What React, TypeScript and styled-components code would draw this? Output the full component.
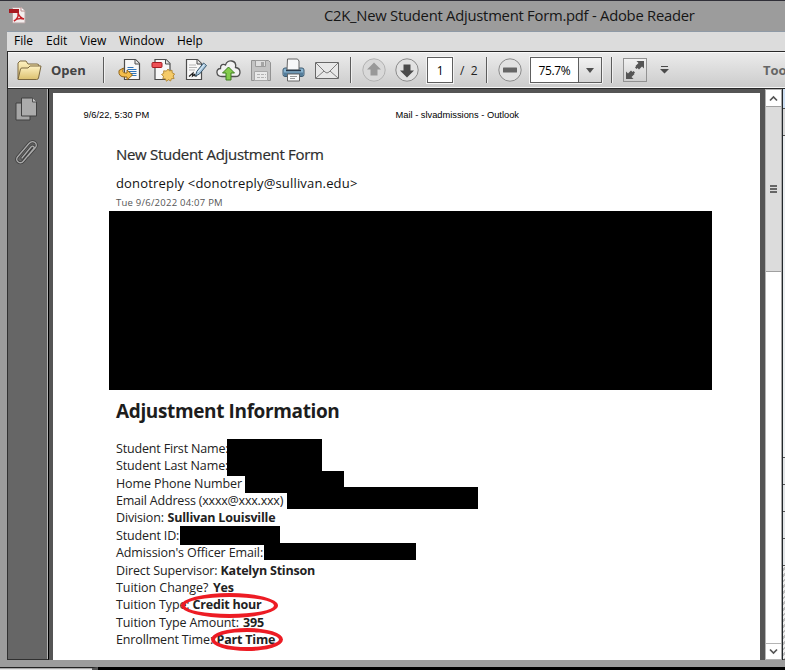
import React from "react";
import styled, { createGlobalStyle, css } from "styled-components";

const ui = `"Open Sans", "Noto Sans", sans-serif`;

const GlobalStyle = createGlobalStyle`
  *, *::before, *::after { box-sizing: border-box; }
  body { margin: 0; overflow: hidden; font-family: ${ui}; }
  svg { display: block; }
`;

const Desktop = styled.div`
  width: 785px;
  height: 670px;
  display: flex;
  flex-direction: column;
  overflow: hidden;
  background: #9c9c9c;
  border-top: 1px solid #302f38;
`;

const TitleBar = styled.header`
  height: 30px;
  flex: none;
  display: flex;
  padding: 6px 0 0 9px;
`;

const Title = styled.h1`
  margin: -3px 0 0 298px;
  font-size: 14.8px;
  line-height: 22px;
  font-weight: 400;
  color: #161616;
  white-space: nowrap;
  letter-spacing: -0.25px;
`;

const Window = styled.main`
  height: 629px;
  flex: none;
  margin-left: 7px;
  display: flex;
  flex-direction: column;
`;

const MenuBar = styled.nav`
  height: 20px;
  flex: none;
  display: flex;
  background: #dcdcdc;
  border-top: 1px solid #8f9aa6;
  padding-left: 7px;
`;

const MenuItem = styled.span<{ $width: number }>`
  width: ${(p) => p.$width}px;
  font-size: 12px;
  line-height: 18px;
  color: #000;
`;

const ToolBar = styled.div`
  height: 38px;
  flex: none;
  display: flex;
  align-items: center;
  overflow: hidden;
  background: linear-gradient(#ececec, #cbcbcb);
  border-top: 1px solid #282828;
  border-bottom: 1px solid #282828;
  border-left: 1px solid #282828;
  box-shadow: inset 0 1px #fafafa, inset 0 -1px #f5f5f5;
`;

const Tool = styled.span<{ $left: number }>`
  flex: none;
  margin-left: ${(p) => p.$left}px;
`;

const Divider = styled.i<{ $left: number }>`
  flex: none;
  width: 2px;
  height: 26px;
  margin-left: ${(p) => p.$left}px;
  background: linear-gradient(90deg, #5c5c5c 50%, #f0f0f0 50%);
`;

const ToolLabel = styled.span<{ $left: number; $width: number; $bold?: boolean; $tone?: string }>`
  flex: none;
  margin-left: ${(p) => p.$left}px;
  width: ${(p) => p.$width}px;
  font-size: ${(p) => (p.$bold ? 13 : 12)}px;
  font-weight: ${(p) => (p.$bold ? 700 : 400)};
  color: ${(p) => p.$tone ?? "#222"};
  white-space: nowrap;
`;

const Field = styled.span<{ $left: number; $width: number }>`
  flex: none;
  display: flex;
  align-items: center;
  justify-content: center;
  margin-left: ${(p) => p.$left}px;
  width: ${(p) => p.$width}px;
  height: 26px;
  border: 1px solid #5e5e5e;
  background: #fff;
  box-shadow: 0 0 0 1px #f3f3f3;
  font-size: 12px;
  color: #000;
  letter-spacing: -0.35px;
`;

const DropButton = styled.span`
  flex: none;
  width: 23px;
  height: 26px;
  border: 1px solid #5e5e5e;
  border-left: 0;
  background: linear-gradient(#f2f2f2, #d5d5d5);
  box-shadow: 1px 0 #f3f3f3, 0 1px #f3f3f3, 0 -1px #f3f3f3;
  display: flex;
  align-items: center;
  justify-content: center;
`;

const ExpandButton = styled.span`
  flex: none;
  width: 24px;
  height: 24px;
  margin-left: 10px;
  border: 1px solid #929292;
  background: linear-gradient(#f1f1f1, #d0d0d0);
`;

const Body = styled.div`
  height: 571px;
  flex: none;
  display: flex;
`;

const SideBar = styled.aside`
  width: 42px;
  flex: none;
  background: #666;
  border-left: 1px solid #303030;
  border-bottom: 1px solid #303030;
  border-right: 1px solid #000;
  box-shadow: inset -1px 0 #b5b5b5;
  padding: 8px 0 0 7px;
`;

const Canvas = styled.div`
  width: 716px;
  flex: none;
  background: #555;
  padding: 4px 5px 0 4px;
`;

const Page = styled.article`
  position: relative;
  height: 567px;
  background: #fff;
  padding: 15px 0 0 63px;
  overflow: hidden;
`;

const PageHeader = styled.div`
  display: flex;
  margin-left: -32.5px;
  height: 14px;
  font: 9.3px/14px "Liberation Sans", Arial, sans-serif;
  color: #000;
  white-space: nowrap;
`;

const Stamp = styled.span<{ $width: number }>`
  width: ${(p) => p.$width}px;
`;

const Subject = styled.h2`
  margin: 20px 0 0;
  height: 24px;
  font-size: 15px;
  line-height: 24px;
  font-weight: 400;
  color: #2d2d2d;
  -webkit-text-stroke: 0.2px #2d2d2d;
  letter-spacing: -0.3px;
`;

const Sender = styled.p`
  margin: 7px 0 0;
  height: 20px;
  font-size: 13px;
  line-height: 20px;
  color: #111;
  letter-spacing: 0.17px;
`;

const Sent = styled.p`
  margin: 3px 0 0;
  height: 14px;
  font-size: 9.5px;
  line-height: 14px;
  color: #555;
  letter-spacing: 0.24px;
`;

const SectionTitle = styled.h3`
  margin: 187px 0 0;
  height: 28px;
  font-size: 19px;
  line-height: 28px;
  font-weight: 700;
  color: #1d1d1d;
  letter-spacing: -0.37px;
`;

const Details = styled.dl`
  margin: 15px 0 0;
`;

const Detail = styled.div`
  display: flex;
  height: 17.36px;
  line-height: 17.36px;
  font-size: 12.5px;
  color: #222;
  white-space: pre;
`;

const Term = styled.dt<{ $spacing: number; $width: number }>`
  width: ${(p) => p.$width}px;
  letter-spacing: ${(p) => p.$spacing}px;
`;

const Value = styled.dd`
  margin: 0;
  font-weight: 700;
  letter-spacing: -0.2px;
`;

const overlay = css<{ $x: number; $y: number; $w: number; $h: number }>`
  position: absolute;
  left: ${(p) => p.$x}px;
  top: ${(p) => p.$y}px;
  width: ${(p) => p.$w}px;
  height: ${(p) => p.$h}px;
`;

const Redaction = styled.span`
  ${overlay}
  background: #000;
`;

const Circled = styled.span`
  ${overlay}
  border: 4px solid #ed1c24;
  border-radius: 50%;
`;

const ScrollBar = styled.div`
  width: 17px;
  flex: none;
  display: flex;
  flex-direction: column;
  background: #fff;
  border-left: 1px solid #b4b4b4;
  border-right: 1px solid #a8a8a8;
`;

const ScrollButton = styled.span<{ $end?: boolean }>`
  height: 17px;
  flex: none;
  display: flex;
  align-items: center;
  justify-content: center;
  border-top: 1px solid #b4b4b4;
  border-bottom: ${(p) => (p.$end ? "1px solid #b4b4b4" : "0")};
  margin-top: ${(p) => (p.$end ? "auto" : "0")};
`;

const Thumb = styled.span`
  height: 166px;
  flex: none;
  background: #dcdcdc;
  border-top: 1px solid #a0a0a0;
  border-bottom: 1px solid #a0a0a0;
  padding: 78px 0 0 4px;
`;

const Grip = styled.i`
  display: block;
  width: 7px;
  height: 2px;
  margin-bottom: 1px;
  background: #666;
`;

const Pane = styled.div`
  width: 3px;
  flex: none;
  display: flex;
  flex-direction: column;
  border-left: 1px solid #22272b;
`;

const PaneCell = styled.span<{ $height: number; $fill: string }>`
  height: ${(p) => p.$height}px;
  flex: none;
  background: ${(p) => p.$fill};
  border-bottom: 1px solid #555;
`;

const TaskEdge = styled.footer`
  margin-top: 7px;
  height: 3px;
  flex: none;
  display: flex;
  background: #000;
`;

const TaskPreview = styled.span`
  width: 98px;
  border-top: 1px solid #222;
  background: linear-gradient(#a8a8a8 50%, #e4e4e4 50%);
  border-right: 6px solid #555;
`;

const PdfLogo = () => (
  <svg width="17" height="17" viewBox="0 0 17 17">
    <path d="M3.5.5h9l3.5 3.5v12H3.5z" fill="#f3eeee" stroke="#b6a5a5" />
    <path d="M12 .5V4h4" fill="#fff" stroke="#b98888" />
    <path d="M0 2h10v4H0z" fill="#a71920" />
    <path d="M9 6c1 4-2 7-4 8 2-2 6-3 10-2-3-1-5-3-6-6z" fill="none" stroke="#c42128" strokeWidth="1.5" />
  </svg>
);

const FolderIcon = () => (
  <svg width="25" height="21" viewBox="0 0 25 21">
    <defs>
      <linearGradient id="folder" x2="0" y2="1">
        <stop stopColor="#fff2c2" />
        <stop offset="1" stopColor="#dbc06e" />
      </linearGradient>
    </defs>
    <path d="M1 19V3l2-2h6l2 3h9q2 0 2 2v4" fill="url(#folder)" stroke="#7c6940" />
    <path d="M1 19.5 3.500 9q.3-1 1.500-1h6l2-2h11l-2.500 12q-.3 1.500-2 1.500z" fill="url(#folder)" stroke="#7c6940" />
  </svg>
);

const Sheet = () => (
  <>
    <path d="M6.5 1.5h11l4 4v16h-15z" fill="#f8f8f8" stroke="#4c4c4c" strokeWidth="1.2" />
    <path d="M17 1.5V6h4.5" fill="#e6e6e6" stroke="#4c4c4c" />
  </>
);

const ConvertIcon = () => (
  <svg width="23" height="24" viewBox="0 0 23 24">
    <Sheet />
    <path d="M9.500 9.500h6M9.500 11.500h9M10.500 13.500h8M12 15.500h6.500M13 17.500h5.500" stroke="#2f74b9" />
    <path d="M1 12.500 5.500 10q-2 5 2 5h1.500v-3l5.500 5-5.500 5v-3H7q-7 0-6-6.500z" fill="#f3bd4b" stroke="#936416" />
  </svg>
);

const CreateIcon = () => (
  <svg width="24" height="24" viewBox="0 0 24 24">
    <g transform="translate(-2.5)"><Sheet /></g>
    <rect x="1" y="4.5" width="10" height="5" rx="1" fill="#ed5156" stroke="#a51b21" />
    <path d="m17 11 1.5 2 2.5-.8.2 2.6 2.4 1.2-1.5 2 1 2.5-2.7.2-.8 2.3-2.1-1.3-2.1 1.5-1-2.5-2.6.1.7-2.6-2-1.7 2.2-1.2v-2.5l2.7.3z" fill="#f5cb68" stroke="#b08430" strokeWidth=".9" />
  </svg>
);

const SignIcon = () => (
  <svg width="24" height="24" viewBox="0 0 24 24">
    <g transform="translate(-5)"><Sheet /></g>
    <path d="M4 7h7M4 9.5h8M4 12h6" stroke="#b5b5b5" />
    <path d="M4 18.500 8 15l-.5 3 2-1.500.5 1.500h2" fill="none" stroke="#222" strokeWidth="1.2" />
    <path d="m10.500 18 1.200-4.500L18.500 5l3 2.5-7 8.500z" fill="#a9c8df" stroke="#39576e" />
    <path d="m13 14 6.500-7.500" stroke="#e5f2fb" />
  </svg>
);

const CloudIcon = () => (
  <svg width="25" height="24" viewBox="0 0 25 24">
    <path d="M6 18.500c-6.500 0-6.500-8-1.500-8-.5-4 3-5 5-3.500 2-6.500 11.500-5 10 2.500 6 .5 6 9 0 9z" fill="#f2f2f2" stroke="#505050" strokeWidth="1.3" />
    <path d="m12.5 9 6 6H15v7h-5v-7H6.500z" fill="#83cc4c" stroke="#3e7d20" />
  </svg>
);

const SaveIcon = () => (
  <svg width="20" height="21" viewBox="0 0 20 21">
    <path d="M.5.5h17l2 2v18H.5z" fill="#c3c3c3" stroke="#929292" />
    <path d="M4.500.5h10v6h-10z" fill="#dedede" stroke="#9b9b9b" />
    <path d="M10 2h3v4h-3z" fill="#a5a5a5" />
    <path d="M3.500 11.500h13v9h-13z" fill="#e9e9e9" stroke="#a8a8a8" />
    <path d="M6 14.500h9M6 17.500h9" stroke="#b2b2b2" strokeDasharray="3 1" />
  </svg>
);

const PrintIcon = () => (
  <svg width="23" height="24" viewBox="0 0 23 24">
    <rect x="1" y="10" width="21" height="8.500" rx="2" fill="#8ab4d0" stroke="#3e5b70" />
    <path d="M2 14.500h19V18H2z" fill="#557d9a" />
    <path d="M5.500 1h10l1.500 2v9h-12z" fill="#f8f8f8" stroke="#666" />
    <path d="M4 12.500h15" stroke="#27384a" strokeWidth="1.500" />
    <path d="M5.500 16h12v7h-12z" fill="#fafafa" stroke="#666" />
    <path d="M8 18.500h7M8 20.500h5" stroke="#999" />
  </svg>
);

const MailIcon = () => (
  <svg width="24" height="17" viewBox="0 0 24 17">
    <path d="M.5.5h23v16H.5z" fill="#e8e8e8" stroke="#686868" />
    <path d="m1 1 9 9q2 2 4 0l9-9M1 16l8-7M23 16l-8-7" fill="none" stroke="#7d7d7d" />
  </svg>
);

const RoundIcon = ({ kind }: { kind: "up" | "down" | "minus" }) => (
  <svg width="24" height="24" viewBox="0 0 24 24">
    <circle cx="12" cy="12" r="11.2" fill={kind === "up" ? "#d9d9d9" : "#e2e2e2"} stroke={kind === "up" ? "#b2b2b2" : "#8b8b8b"} />
    {kind === "up" && <path d="m12 4.500 7 7h-3.500v6h-7v-6H5z" fill="#999" />}
    {kind === "down" && <path d="m12 19.500 7-7h-3.500v-6h-7v6H5z" fill="#4c4c4c" />}
    {kind === "minus" && <rect x="5" y="9.500" width="14" height="5" rx=".5" fill="#666" />}
  </svg>
);

const ExpandIcon = () => (
  <svg width="22" height="22" viewBox="0 0 22 22">
    <path d="M12.500 2H20v7.500l-2-2-3 3-1.500-1.500-1 1L11 8.500l1-1-.5-.5 3-3zM9.500 20H2v-7.500l2 2 3-3L8.500 13l1-1L11 13.500l-1 1 .5.5-3 3z" fill="#555" />
  </svg>
);

const PagesIcon = () => (
  <svg width="23" height="25" viewBox="0 0 23 25">
    <path d="M1 6h14v17H1z" fill="#a6a6a6" stroke="#414141" />
    <path d="M6.500 1h11L21.500 5v14h-15z" fill="#acacac" stroke="#414141" />
    <path d="M17.500 1v4h4" fill="#ccc" stroke="#505050" />
  </svg>
);

const ClipIcon = () => (
  <svg width="23" height="25" viewBox="0 0 23 25">
    <g fill="none" strokeLinecap="round">
      <path d="m7 18 9-11c2-2 4 0 2.500 2l-10 12c-3 4-9 0-6-4L14 3.500C18-1 24 4 20 8l-7 8" stroke="#3f3f3f" strokeWidth="3" />
      <path d="m7 18 9-11c2-2 4 0 2.500 2l-10 12c-3 4-9 0-6-4L14 3.500C18-1 24 4 20 8l-7 8" stroke="#aaa" strokeWidth="1.300" />
    </g>
  </svg>
);

const ClipSlot = styled.div`
  margin-top: 18px;
`;

const Chevron = ({ down }: { down?: boolean }) => (
  <svg width="9" height="7" viewBox="0 0 9 7">
    <path d={down ? "m1 1.500 3.500 3.500L8 1.500" : "m1 5.500 3.500-3.500L8 5.500"} fill="none" stroke="#555" strokeWidth="1.700" />
  </svg>
);

const menus: [string, number][] = [["File", 32], ["Edit", 34], ["View", 39], ["Window", 58], ["Help", 40]];

const details: { term: string; width: number; spacing: number; value?: string }[] = [
  { term: "Student First Name:", width: 113, spacing: -0.17 },
  { term: "Student Last Name:", width: 113, spacing: -0.12 },
  { term: "Home Phone Number", width: 128, spacing: -0.1 },
  { term: "Email Address (xxxx@xxx.xxx)", width: 170, spacing: -0.2 },
  { term: "Division:", width: 51.5, spacing: -0.15, value: "Sullivan Louisville" },
  { term: "Student ID:", width: 65, spacing: -0.15 },
  { term: "Admission's Officer Email:", width: 149, spacing: -0.12 },
  { term: "Direct Supervisor:", width: 104.500, spacing: -0.12, value: "Katelyn Stinson" },
  { term: "Tuition Change?", width: 97, spacing: -0.05, value: "Yes" },
  { term: "Tuition Type:", width: 76.500, spacing: -0.1, value: "Credit hour" },
  { term: "Tuition Type Amount:", width: 127, spacing: -0.1, value: "395" },
  { term: "Enrollment Time:", width: 100.500, spacing: -0.15, value: "Part Time" },
];

const redactions = [
  [56, 118, 603, 179],
  [174, 346, 95, 37],
  [192, 378, 99, 22],
  [234, 394, 191, 22],
  [127, 433, 100, 19],
  [211, 450, 152, 17],
];

const paneCells: [number, string][] = [
  [20, "#cfe0f3"], [27, "#d8d8d8"], [322, "#eceff1"], [27, "#e3e6e8"],
  [27, "#e3e6e8"], [27, "#e3e6e8"], [27, "#e3e6e8"],
  [94, "repeating-linear-gradient(135deg, #eee 0 2px, #bbb 2px 4px)"],
];

export default function App() {
  return (
    <Desktop>
      <GlobalStyle />
      <TitleBar>
        <PdfLogo />
        <Title>C2K_New Student Adjustment Form.pdf - Adobe Reader</Title>
      </TitleBar>
      <Window>
        <MenuBar>
          {menus.map(([label, width]) => <MenuItem key={label} $width={width}>{label}</MenuItem>)}
        </MenuBar>
        <ToolBar>
          <Tool $left={9}><FolderIcon /></Tool>
          <ToolLabel $left={9} $width={37} $bold $tone="#444">Open</ToolLabel>
          <Divider $left={15} />
          <Tool $left={13}><ConvertIcon /></Tool>
          <Tool $left={10}><CreateIcon /></Tool>
          <Tool $left={10}><SignIcon /></Tool>
          <Tool $left={7}><CloudIcon /></Tool>
          <Tool $left={10}><SaveIcon /></Tool>
          <Tool $left={11}><PrintIcon /></Tool>
          <Tool $left={10}><MailIcon /></Tool>
          <Divider $left={11} />
          <Tool $left={10}><RoundIcon kind="up" /></Tool>
          <Tool $left={9}><RoundIcon kind="down" /></Tool>
          <Field $left={8} $width={26}>1</Field>
          <ToolLabel $left={7} $width={20}>/ &nbsp;2</ToolLabel>
          <Divider $left={6} />
          <Tool $left={10}><RoundIcon kind="minus" /></Tool>
          <Field $left={8} $width={49}>75.7%</Field>
          <DropButton>
            <svg width="8" height="5" viewBox="0 0 8 5"><path d="M0 0h8L4 5z" fill="#4f4f4f" /></svg>
          </DropButton>
          <Divider $left={9} />
          <ExpandButton><ExpandIcon /></ExpandButton>
          <Tool $left={13}>
            <svg width="9" height="8" viewBox="0 0 9 8"><path d="M1 0h7v1H1zM0 3h9L4.500 7.500z" fill="#4b4b4b" /></svg>
          </Tool>
          <ToolLabel $left={94} $width={40} $bold $tone="#666">Tools</ToolLabel>
        </ToolBar>
        <Body>
          <SideBar>
            <PagesIcon />
            <ClipSlot><ClipIcon /></ClipSlot>
          </SideBar>
          <Canvas>
            <Page>
              <PageHeader>
                <Stamp $width={312}>9/6/22, 5:30 PM</Stamp>
                <Stamp $width={130}>Mail - slvadmissions - Outlook</Stamp>
              </PageHeader>
              <Subject>New Student Adjustment Form</Subject>
              <Sender>donotreply &lt;donotreply@sullivan.edu&gt;</Sender>
              <Sent>Tue 9/6/2022 04:07 PM</Sent>
              <SectionTitle>Adjustment Information</SectionTitle>
              <Details>
                {details.map((d) => (
                  <Detail key={d.term}>
                    <Term $width={d.width} $spacing={d.spacing}>{d.term}</Term>
                    {d.value && <Value>{d.value}</Value>}
                  </Detail>
                ))}
              </Details>
              {redactions.map(([x, y, w, h]) => <Redaction key={y} $x={x} $y={y} $w={w} $h={h} />)}
              <Circled $x={128} $y={500} $w={97} $h={25} />
              <Circled $x={158} $y={535} $w={72} $h={23} />
            </Page>
          </Canvas>
          <ScrollBar>
            <ScrollButton><Chevron /></ScrollButton>
            <Thumb><Grip /><Grip /><Grip /></Thumb>
            <ScrollButton $end><Chevron down /></ScrollButton>
          </ScrollBar>
          <Pane>
            {paneCells.map(([height, fill], i) => <PaneCell key={i} $height={height} $fill={fill} />)}
          </Pane>
        </Body>
      </Window>
      <TaskEdge><TaskPreview /></TaskEdge>
    </Desktop>
  );
}
